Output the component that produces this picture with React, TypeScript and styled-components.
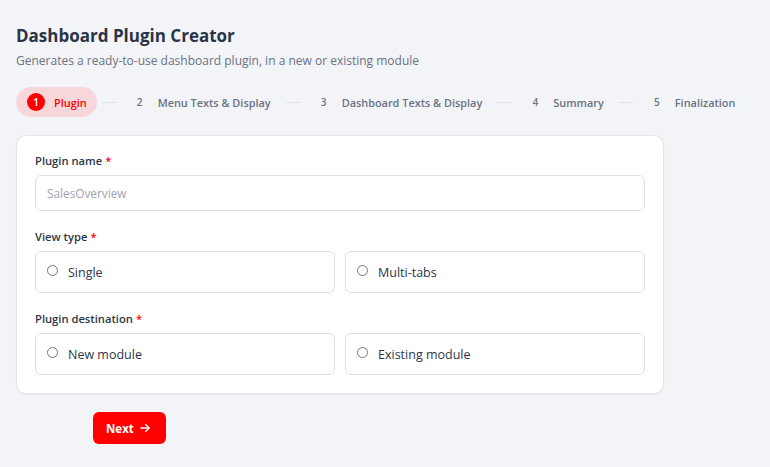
import React, { useState } from "react";
import styled, { createGlobalStyle } from "styled-components";

const GlobalStyle = createGlobalStyle`
  body {
    margin: 0;
    background: #f3f4f8;
    font-family: "Open Sans", "Noto Sans", sans-serif;
    color: #2d3648;
  }
`;

const Page = styled.div`
  padding: 16px 16px 20px 16px;
`;

const Title = styled.h1`
  margin: 8px 0 0 0;
  font-size: 17px;
  font-weight: 700;
  line-height: 24px;
  color: #2b3446;
`;

const Subtitle = styled.p`
  margin: 4px 0 0 0;
  font-size: 12px;
  line-height: 18px;
  color: #6b7280;
`;

const Steps = styled.div`
  display: flex;
  align-items: center;
  margin-top: 17px;
  white-space: nowrap;
`;

const Step = styled.div<{ $active?: boolean }>`
  display: flex;
  align-items: center;
  gap: 9px;
  height: 30px;
  padding: 0 10px 0 11px;
  border-radius: 15px;
  background: ${(p) => (p.$active ? "#f8d7db" : "transparent")};
`;

const StepNum = styled.span<{ $active?: boolean }>`
  display: flex;
  align-items: center;
  justify-content: center;
  width: 18px;
  height: 18px;
  border-radius: 50%;
  font-size: 10px;
  font-weight: 600;
  background: ${(p) => (p.$active ? "#ff0000" : "transparent")};
  color: ${(p) => (p.$active ? "#ffffff" : "#6b7280")};
`;

const StepLabel = styled.span<{ $active?: boolean }>`
  font-size: 10.9px;
  font-weight: 600;
  color: ${(p) => (p.$active ? "#ff0000" : "#6b7280")};
`;

const StepLine = styled.span`
  width: 14px;
  height: 1px;
  margin: 0 4px 0 5px;
  background: #dfe2e8;
`;

const Card = styled.div`
  width: 648px;
  box-sizing: border-box;
  margin-top: 18px;
  padding: 17px 18px 18px;
  background: #ffffff;
  border: 1px solid #e4e6ec;
  border-radius: 10px;
  box-shadow: 0 1px 2px rgba(16, 24, 40, 0.04);
  display: flex;
  flex-direction: column;
  gap: 18px;
`;

const Field = styled.div`
  display: flex;
  flex-direction: column;
  gap: 6px;
`;

const Label = styled.label`
  font-size: 11.2px;
  font-weight: 600;
  line-height: 16px;
  color: #2d3648;
`;

const Required = styled.span`
  color: #ff0000;
  margin-left: 3px;
`;

const Input = styled.input`
  height: 36px;
  box-sizing: border-box;
  padding: 0 11px;
  border: 1px solid #dcdfe6;
  border-radius: 6px;
  font-family: inherit;
  font-size: 11.8px;
  color: #2d3648;
  outline: none;
  &::placeholder {
    color: #9ca3af;
  }
`;

const Options = styled.div`
  display: grid;
  grid-template-columns: 1fr 1fr;
  gap: 10px;
`;

const Option = styled.label`
  display: flex;
  align-items: center;
  gap: 10px;
  height: 42px;
  box-sizing: border-box;
  padding: 0 11px;
  border: 1px solid #dcdfe6;
  border-radius: 6px;
  cursor: pointer;
`;

const Radio = styled.span<{ $checked?: boolean }>`
  width: 11px;
  height: 11px;
  box-sizing: border-box;
  border-radius: 50%;
  border: 1px solid #767676;
  margin-top: -3px;
  background: ${(p) => (p.$checked ? "#ff0000" : "#ffffff")};
`;

const OptionText = styled.span`
  font-size: 12.5px;
  font-weight: 500;
  color: #2d3648;
`;

const Footer = styled.div`
  display: flex;
  padding-left: 77px;
  margin-top: 18px;
`;

const NextButton = styled.button`
  display: flex;
  align-items: center;
  gap: 4px;
  height: 32px;
  padding: 0 14px 0 13px;
  border: none;
  border-radius: 6px;
  background: #ff0000;
  color: #ffffff;
  font-family: inherit;
  font-size: 11.5px;
  font-weight: 700;
  cursor: pointer;
`;

const steps = [
  "Plugin",
  "Menu Texts & Display",
  "Dashboard Texts & Display",
  "Summary",
  "Finalization",
];

function RadioGroup({ options }: { options: string[] }) {
  const [value, setValue] = useState<string | null>(null);
  return (
    <Options>
      {options.map((o) => (
        <Option key={o} onClick={() => setValue(o)}>
          <Radio $checked={value === o} />
          <OptionText>{o}</OptionText>
        </Option>
      ))}
    </Options>
  );
}

export default function App() {
  const current = 0;
  return (
    <Page>
      <GlobalStyle />
      <Title>Dashboard Plugin Creator</Title>
      <Subtitle>
        Generates a ready-to-use dashboard plugin, in a new or existing module
      </Subtitle>
      <Steps>
        {steps.map((s, i) => (
          <React.Fragment key={s}>
            {i > 0 && <StepLine />}
            <Step $active={i === current}>
              <StepNum $active={i === current}>{i + 1}</StepNum>
              <StepLabel $active={i === current}>{s}</StepLabel>
            </Step>
          </React.Fragment>
        ))}
      </Steps>
      <Card>
        <Field>
          <Label>
            Plugin name<Required>*</Required>
          </Label>
          <Input placeholder="SalesOverview" />
        </Field>
        <Field>
          <Label>
            View type<Required>*</Required>
          </Label>
          <RadioGroup options={["Single", "Multi-tabs"]} />
        </Field>
        <Field>
          <Label>
            Plugin destination<Required>*</Required>
          </Label>
          <RadioGroup options={["New module", "Existing module"]} />
        </Field>
      </Card>
      <Footer>
        <NextButton>
          Next
          <svg width="14" height="14" viewBox="0 0 24 24" fill="none" stroke="currentColor" strokeWidth="2.2" strokeLinecap="round" strokeLinejoin="round">
            <path d="M5 12h14" />
            <path d="M13 6l6 6-6 6" />
          </svg>
        </NextButton>
      </Footer>
    </Page>
  );
}
